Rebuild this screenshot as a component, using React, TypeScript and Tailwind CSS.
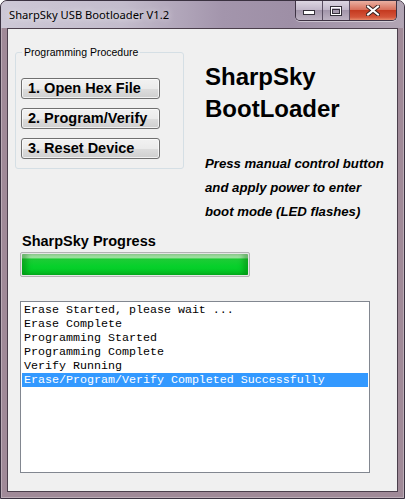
import React from "react";

const logLines = [
  "Erase Started, please wait ...",
  "Erase Complete",
  "Programming Started",
  "Programming Complete",
  "Verify Running",
  "Erase/Program/Verify Completed Successfully",
];

const steps = ["1. Open Hex File", "2. Program/Verify", "3. Reset Device"];

const CaptionButtons = () => (
  <div className="mr-[7px] flex h-[20px] self-start overflow-hidden rounded-b-[5px] border border-t-0 border-[#3e3344] shadow-[0_1px_0_rgba(255,255,255,0.45)]">
    <div className="flex w-[27px] items-end justify-center border-r border-[#5a4e62] bg-[linear-gradient(180deg,#dcd6e2_0%,#c2b8ca_45%,#a396ab_50%,#bdb2c2_100%)] pb-[5px]">
      <svg width="12" height="5" viewBox="0 0 12 5">
        <rect x="0.5" y="0.5" width="11" height="4" fill="#fff" stroke="#35303a" />
      </svg>
    </div>
    <div className="flex w-[27px] items-center justify-center border-r border-[#5a4e62] bg-[linear-gradient(180deg,#dcd6e2_0%,#c2b8ca_45%,#a396ab_50%,#bdb2c2_100%)]">
      <svg width="12" height="10" viewBox="0 0 12 10">
        <rect x="0.5" y="0.5" width="11" height="9" fill="none" stroke="#35303a" />
        <rect x="1.5" y="1.5" width="9" height="7" fill="none" stroke="#fff" />
        <rect x="2.5" y="3.5" width="7" height="4" fill="none" stroke="#35303a" />
      </svg>
    </div>
    <div className="flex w-[46px] items-center justify-center bg-[linear-gradient(180deg,#eab0a2_0%,#d8715c_45%,#c53a20_50%,#d4553a_85%,#e68a6c_100%)]">
      <svg width="14" height="11" viewBox="0 0 14 11">
        <path d="M2 1.5 L12 9.5 M12 1.5 L2 9.5" stroke="#3a2422" strokeWidth="4" strokeLinecap="square" />
        <path d="M2 1.5 L12 9.5 M12 1.5 L2 9.5" stroke="#fff" strokeWidth="2" strokeLinecap="square" />
      </svg>
    </div>
  </div>
);

export default function App() {
  return (
    <div className="flex h-[499px] w-[405px] flex-col overflow-hidden rounded-t-[7px] border border-[#3a3140] bg-[#a08a98] shadow-[inset_0_0_0_1px_rgba(255,255,255,0.3)] font-['Liberation_Sans',Arial,sans-serif]">
      {/* title bar */}
      <div className="flex h-[27px] shrink-0 bg-[linear-gradient(90deg,#cdc8d6_0%,#c3bccc_30%,#a395ac_55%,#9e8fa6_72%,#b2a5b4_100%)]">
        <div className="pl-[8px] pt-[6px] text-[11.2px] leading-[16px] text-black font-['Noto_Sans',sans-serif] [text-shadow:0_0_6px_rgba(255,255,255,0.9)]">
          SharpSky USB Bootloader V1.2
        </div>
        <div className="flex-1" />
        <CaptionButtons />
      </div>

      {/* client area */}
      <div className="mx-[6px] h-[464px] shrink-0 border border-[#4b3f4c] bg-[#f0f0f0]">
        <div className="flex items-start">
          {/* group box */}
          <div className="relative ml-[7px] mt-[23px] h-[117px] w-[169px] rounded-[3px] border border-[#d5dfe5]">
            <span className="absolute -top-[8px] left-[6px] bg-[#f0f0f0] px-[2px] text-[10.5px] leading-[15px] text-black">
              Programming Procedure
            </span>
            <div className="flex flex-col gap-[9px] pl-[5px] pt-[25px]">
              {steps.map((s) => (
                <button
                  key={s}
                  className="h-[21px] w-[139px] rounded-[3px] border border-[#707070] bg-[linear-gradient(180deg,#f2f2f2_0%,#ebebeb_50%,#dddddd_51%,#cfcfcf_100%)] pl-[6px] text-left text-[14.5px] font-bold leading-[19px] text-black shadow-[inset_0_0_0_1px_rgba(255,255,255,0.7)]"
                >
                  {s}
                </button>
              ))}
            </div>
          </div>

          {/* heading + hint */}
          <div className="ml-[21px] mt-[32px]">
            <div className="text-[24px] font-bold leading-[32px] text-black">
              <div>SharpSky</div>
              <div>BootLoader</div>
            </div>
            <div className="mt-[27px] text-[13.2px] font-bold italic leading-[24px] text-black">
              <div>Press manual control button</div>
              <div>and apply power to enter</div>
              <div>boot mode (LED flashes)</div>
            </div>
          </div>
        </div>

        <div className="ml-[14px] mt-[9px] text-[14.5px] font-bold leading-[17px] text-black">
          SharpSky Progress
        </div>
        <div className="ml-[12px] mt-[2px] h-[25px] w-[230px] rounded-[2px] border border-[#b2b2b2] bg-[#e6e6e6] p-[1px]">
          <div className="h-full w-full rounded-[1px] bg-[linear-gradient(180deg,#c6f2c6_0%,#9fe8a3_18%,#1dcc36_24%,#06d02a_60%,#05c627_100%)] shadow-[inset_5px_0_5px_rgba(0,100,0,0.35),inset_-5px_0_5px_rgba(0,100,0,0.35)]" />
        </div>

        <div className="ml-[12px] mt-[24px] h-[172px] w-[350px] border border-[#828790] bg-white p-[1px]">
          {logLines.map((l, i) => (
            <div
              key={l}
              className={
                "h-[14px] whitespace-pre pl-[2px] text-[11.67px] leading-[14px] font-['Liberation_Mono','Courier_New',monospace] " +
                (i === logLines.length - 1 ? "bg-[#3399ff] text-white" : "text-black")
              }
            >
              {l}
            </div>
          ))}
        </div>
      </div>
    </div>
  );
}
